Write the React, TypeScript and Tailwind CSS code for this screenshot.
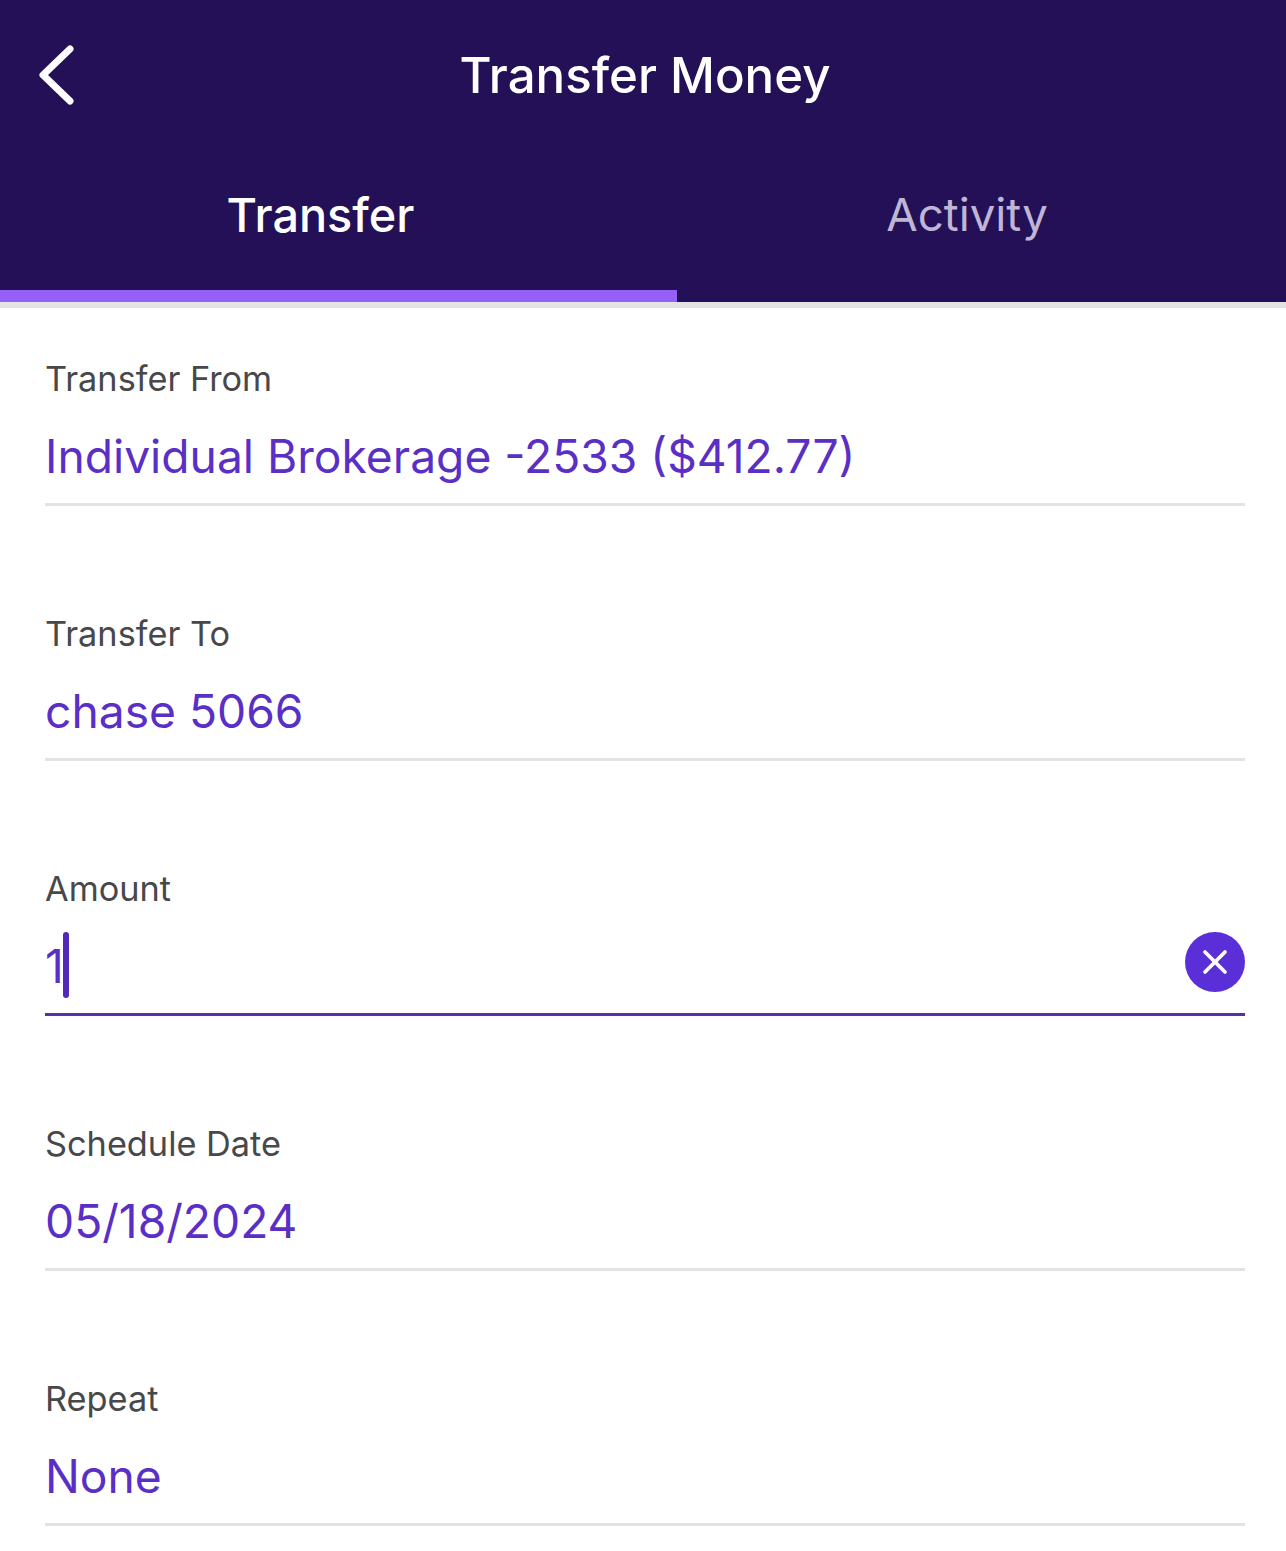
import React from 'react'
import { X } from 'lucide-react'

const font = { fontFamily: 'Inter, "Liberation Sans", sans-serif' }

const Field = ({ label, value }: { label: string; value: string }) => (
    <div className="h-[255px] pl-[45px] pr-[41px]">
        <div className="h-[198px] border-b-[3px] border-[#e3e3e6]">
            <p className="pt-[50px] text-[34.3px] leading-[42px] text-[#48484a]">{label}</p>
            <p className="mt-[26px] text-[46.2px] leading-[60px] text-[#5a2fc6]">{value}</p>
        </div>
    </div>
)

export default function App() {
    return (
        <div style={font} className="w-[1286px] h-[1551px] overflow-hidden bg-white">
            {/* Header */}
            <div className="h-[302px] bg-[#241056] flex flex-col">
                <div className="relative h-[150px] pt-[45px] text-center">
                    <svg className="absolute left-[37px] top-[43px]" width="40" height="64" viewBox="0 0 40 64" fill="none">
                        <path d="M33 6 L6 32 L33 58" stroke="#fff" strokeWidth="7" strokeLinecap="round" strokeLinejoin="round" />
                    </svg>
                    <h1 className="pl-[4px] text-[49.2px] leading-[60px] font-[550] text-white">Transfer Money</h1>
                </div>
                <div className="flex flex-1">
                    <div className="w-[677px] border-b-[12px] border-[#9460f5] pt-[35px] pr-[36px] text-center text-[46.8px] leading-[60px] font-[550] text-white">
                        Transfer
                    </div>
                    <div className="flex-1 pt-[35px] pr-[29px] text-center text-[45.6px] leading-[60px] text-[#bfb6d6]">
                        Activity
                    </div>
                </div>
            </div>
            <div className="h-[6px] bg-[#e3e3e6]" />

            {/* Form */}
            <div>
                <Field label="Transfer From" value="Individual Brokerage -2533 ($412.77)" />
                <Field label="Transfer To" value="chase 5066" />
                <div className="h-[255px] pl-[45px] pr-[41px]">
                    <div className="h-[198px] border-b-[3px] border-[#5b2dab]">
                        <p className="pt-[50px] text-[34.3px] leading-[42px] text-[#48484a]">Amount</p>
                        <div className="mt-[22px] flex items-center justify-between">
                            <div className="flex items-center h-[66px]">
                                <span className="pt-[2px] text-[46.2px] leading-[60px] text-[#5a2fc6]">1</span>
                                <span className="-ml-[1px] h-[66px] w-[6px] rounded-full bg-[#4f2bb8]" />
                            </div>
                            <button className="-mt-[6px] w-[60px] h-[60px] rounded-full bg-[#5a2fd8] flex items-center justify-center">
                                <X size={40} color="#fff" strokeWidth={2.2} />
                            </button>
                        </div>
                    </div>
                </div>
                <Field label="Schedule Date" value="05/18/2024" />
                <Field label="Repeat" value="None" />
            </div>
        </div>
    )
}
